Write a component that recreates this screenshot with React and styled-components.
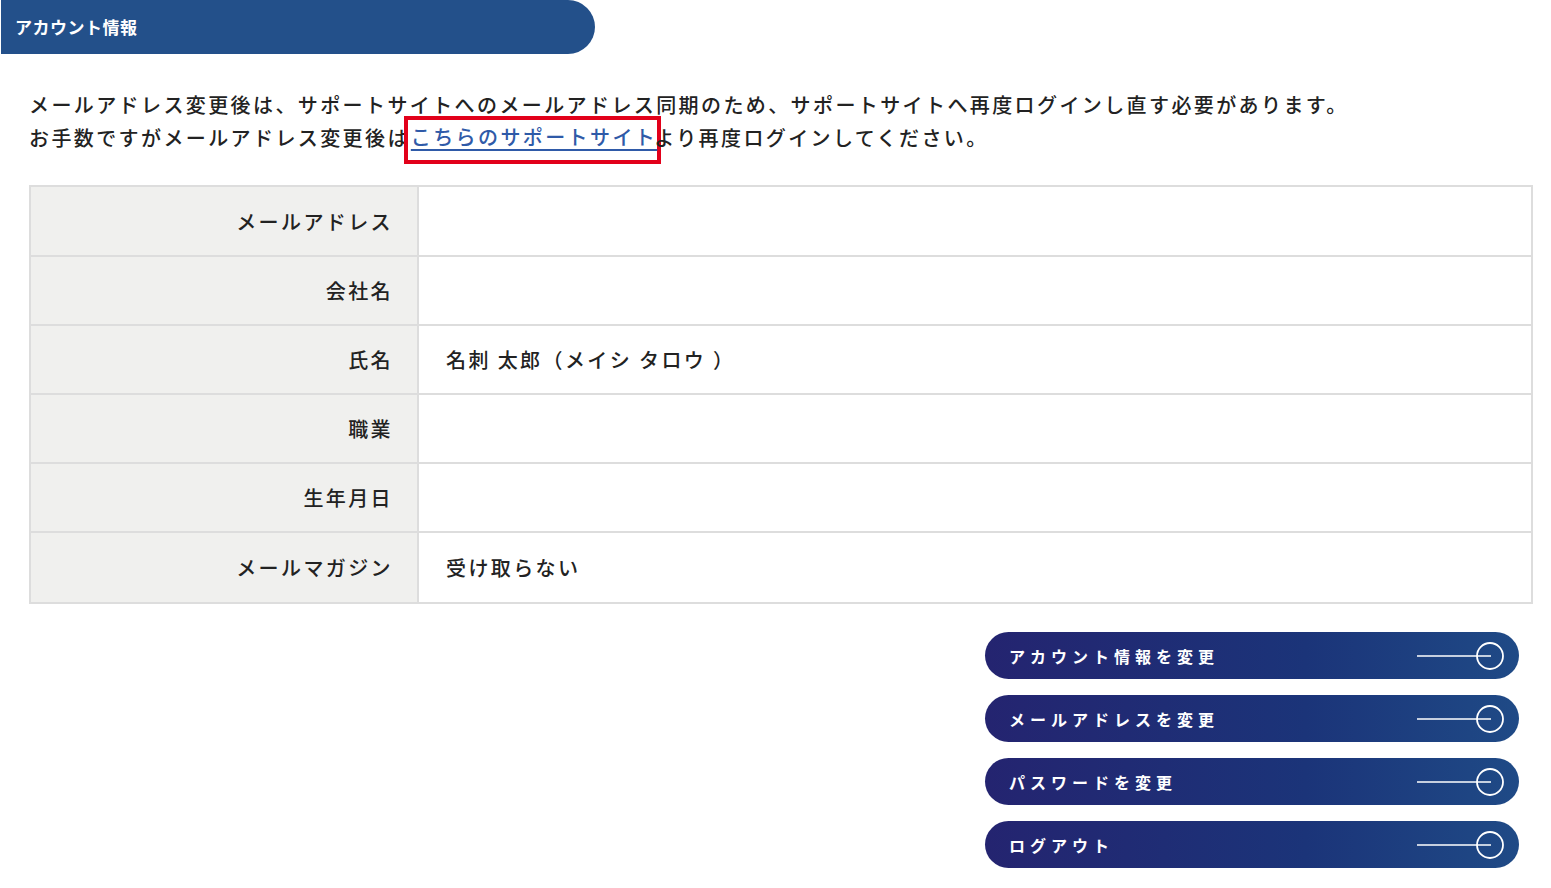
import React from 'react';
import styled, { createGlobalStyle } from 'styled-components';

const GlobalStyle = createGlobalStyle`
  body {
    margin: 0;
    background: #ffffff;
    font-family: "Noto Sans CJK JP", "Noto Sans", sans-serif;
    color: #222222;
  }
`;

const rows = [
  { label: 'メールアドレス', value: '' },
  { label: '会社名', value: '' },
  { label: '氏名', value: '名刺 太郎（メイシ タロウ ）' },
  { label: '職業', value: '' },
  { label: '生年月日', value: '' },
  { label: 'メールマガジン', value: '受け取らない' },
];

const actions = ['アカウント情報を変更', 'メールアドレスを変更', 'パスワードを変更', 'ログアウト'];

const ArrowIcon = () => (
  <svg width="90" height="30" viewBox="0 0 90 30">
    <line x1="0" y1="15" x2="74" y2="15" stroke="#ffffff" strokeWidth="1.6" />
    <circle cx="73" cy="15" r="13" fill="none" stroke="#ffffff" strokeWidth="1.8" />
  </svg>
);

const App = () => {
  return (
    <Page>
      <GlobalStyle />
      <SectionTitle>アカウント情報</SectionTitle>
      <Notice>
        メールアドレス変更後は、サポートサイトへのメールアドレス同期のため、サポートサイトへ再度ログインし直す必要があります。
        <br />
        お手数ですがメールアドレス変更後は
        <Highlight>
          <SupportLink href="#">こちらのサポートサイト</SupportLink>
        </Highlight>
        より再度ログインしてください。
      </Notice>
      <InfoTable>
        {rows.map(row => (
          <Row key={row.label}>
            <Label>{row.label}</Label>
            <Value>{row.value}</Value>
          </Row>
        ))}
      </InfoTable>
      <Actions>
        {actions.map(text => (
          <ActionButton key={text}>
            <span>{text}</span>
            <ArrowIcon />
          </ActionButton>
        ))}
      </Actions>
    </Page>
  );
};

export default App;

const Page = styled.div`
  width: 1551px;
  padding-bottom: 20px;
`;

const SectionTitle = styled.div`
  width: 594px;
  height: 54px;
  margin-left: 1px;
  padding: 0 0 1px 14px;
  box-sizing: border-box;
  display: flex;
  align-items: center;
  background-color: #23508a;
  border-radius: 0 27px 27px 0;
  color: #ffffff;
  font-size: 17px;
  font-weight: 700;
  letter-spacing: 0.5px;
`;

const Notice = styled.p`
  margin: 34px 0 0 29px;
  font-size: 20px;
  font-weight: 500;
  line-height: 33px;
  letter-spacing: 2.4px;
  color: #222222;
`;

const Highlight = styled.span`
  display: inline-block;
  border: 4px solid #e2001a;
  padding: 2px 0 8px 3px;
  margin: -5px -7px 0 -6px;
  line-height: 30px;
  vertical-align: top;
`;

const SupportLink = styled.a`
  color: #2f5aa8;
  text-decoration: underline;
  text-underline-offset: 4px;
  text-decoration-thickness: 2px;
`;

const InfoTable = styled.div`
  margin: 21px 18px 0 29px;
  border: 2px solid #dddddd;
  display: flex;
  flex-direction: column;
`;

const Row = styled.div`
  display: grid;
  grid-template-columns: 388px 1fr;
  height: 69px;
  border-bottom: 2px solid #dddddd;
  box-sizing: border-box;

  &:first-child {
    height: 70px;
  }

  &:last-child {
    border-bottom: none;
  }
`;

const Label = styled.div`
  background-color: #f0f0ee;
  border-right: 2px solid #dddddd;
  display: flex;
  align-items: center;
  justify-content: flex-end;
  padding-right: 24px;
  font-size: 20px;
  font-weight: 500;
  letter-spacing: 2.4px;
  color: #222222;
`;

const Value = styled.div`
  display: flex;
  align-items: center;
  padding-left: 27px;
  font-size: 20px;
  font-weight: 500;
  letter-spacing: 2.4px;
  color: #222222;
`;

const Actions = styled.div`
  display: flex;
  flex-direction: column;
  align-items: flex-end;
  gap: 16px;
  margin-top: 28px;
  padding-right: 32px;
`;

const ActionButton = styled.button`
  width: 534px;
  height: 47px;
  border: none;
  border-radius: 24px;
  background: linear-gradient(90deg, #242470 0%, #1b3479 60%, #1f4a86 100%);
  color: #ffffff;
  display: flex;
  align-items: center;
  justify-content: space-between;
  padding: 0 12px 0 24px;
  font-family: "Noto Sans CJK JP", "Noto Sans", sans-serif;
  font-size: 16px;
  font-weight: 700;
  letter-spacing: 5px;
  cursor: pointer;
`;
